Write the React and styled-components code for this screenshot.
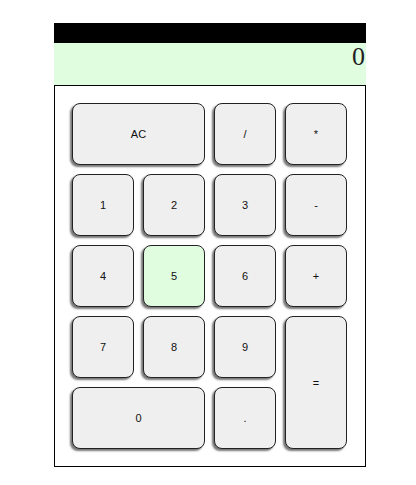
import React, { useState } from 'react'
import styled, { createGlobalStyle } from 'styled-components';

const GlobalStyle = createGlobalStyle`
    body {
        margin: 0;
        background: #ffffff;
        font-family: "Liberation Sans", Arial, sans-serif;
    }
`;

const Calculator = styled.div`
    width: 312px;
    margin: 23px 0 0 54px;
    display: flex;
    flex-direction: column;
`;

const TopBar = styled.div`
    height: 20px;
    background-color: #000000;
`;

const Display = styled.div`
    height: 42px;
    background-color: #e0fde0;
    color: #222222;
    font-family: "Liberation Serif", "Times New Roman", serif;
    font-size: 26px;
    text-align: right;
    padding-right: 1px;
    line-height: 28px;
`;

const Keypad = styled.div`
    box-sizing: border-box;
    border: 1px solid #000000;
    padding: 17px 18px 17px 17px;
    display: grid;
    grid-template-columns: repeat(4, 62px);
    grid-auto-rows: 62px;
    gap: 9px;
`;

const Key = styled.button`
    box-sizing: border-box;
    margin: 0;
    padding: 0;
    border: 1px solid #222222;
    border-radius: 8px;
    background-color: ${props => props.$active ? '#e0fde0' : '#efefef'};
    box-shadow: -2px 2px 2px #777777;
    font-family: "Liberation Sans", Arial, sans-serif;
    font-size: 11px;
    color: #111111;
    grid-column: span ${props => props.$wide ? 2 : 1};
    grid-row: span ${props => props.$tall ? 2 : 1};
    cursor: pointer;
`;

const keys = [
    { label: 'AC', wide: true },
    { label: '/' },
    { label: '*' },
    { label: '1' },
    { label: '2' },
    { label: '3' },
    { label: '-' },
    { label: '4' },
    { label: '5' },
    { label: '6' },
    { label: '+' },
    { label: '7' },
    { label: '8' },
    { label: '9' },
    { label: '=', tall: true },
    { label: '0', wide: true },
    { label: '.' },
];

const App = () => {
  const [value] = useState('0');
  const [active, setActive] = useState('5');

  return (
    <>
        <GlobalStyle />
        <Calculator>
            <TopBar />
            <Display>{value}</Display>
            <Keypad>
                {keys.map(k =>
                    <Key
                        key={k.label}
                        $wide={k.wide}
                        $tall={k.tall}
                        $active={active === k.label}
                        onClick={() => setActive(k.label)}
                    >
                        {k.label}
                    </Key>
                )}
            </Keypad>
        </Calculator>
    </>
  )
}

export default App
